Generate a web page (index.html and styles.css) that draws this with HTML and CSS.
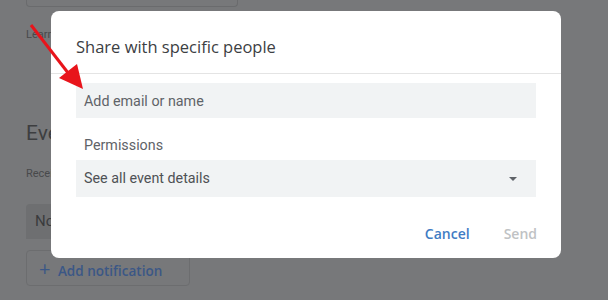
FILE: index.html
```html
<!DOCTYPE html>
<html lang="en">
  <head>
    <meta charset="utf-8" />
    <title>Share with specific people</title>
    <link rel="stylesheet" href="styles.css">
  </head>

  <body>
    <div class="page">
      <div class="top-box"></div>
      <div class="learn">Learn more</div>
      <div class="section-title">Event notifications</div>
      <div class="hint">Receive notifications</div>
      <div class="notif-box">No notifications</div>
      <div class="add-btn"><span class="plus">+</span> Add notification</div>
    </div>

    <div class="dialog">
      <div class="dialog-title">Share with specific people</div>
      <div class="dialog-body">
        <div class="field">Add email or name</div>
        <div class="perm-label">Permissions</div>
        <div class="field select">
          <span>See all event details</span>
          <span class="caret"></span>
        </div>
      </div>
      <div class="dialog-actions">
        <span class="btn btn-cancel">Cancel</span>
        <span class="btn btn-send">Send</span>
      </div>
    </div>

    <svg class="arrow" width="100" height="100" viewBox="0 0 100 100">
      <line x1="31" y1="25" x2="72" y2="78" stroke="#e8141b" stroke-width="3" />
      <polygon points="83,89 59,78 77,64" fill="#e8141b" />
    </svg>
  </body>
</html>
```

FILE: styles.css
```css
body {
  margin: 0;
  background-color: #77787a;
  font-family: Roboto, "Liberation Sans", sans-serif;
  position: relative;
  height: 300px;
  overflow: hidden;
}

.page {
  padding-left: 26px;
  color: #3d3e40;
}

.top-box {
  width: 210px;
  height: 6px;
  border: 1px solid #6a6b6d;
  border-top: none;
  border-radius: 0 0 4px 4px;
}

.learn {
  margin-top: 21px;
  font-size: 11px;
  color: #48494b;
}

.section-title {
  margin-top: 80px;
  font-size: 21px;
  color: #3d3e40;
}

.hint {
  margin-top: 22px;
  font-size: 11px;
  color: #48494b;
}

.notif-box {
  margin-top: 24px;
  width: 140px;
  height: 35px;
  line-height: 35px;
  padding-left: 9px;
  background-color: #6e6f71;
  border-radius: 4px 4px 0 0;
  font-size: 15px;
  color: #3a3b3d;
}

.add-btn {
  margin-top: 11px;
  width: 164px;
  height: 36px;
  line-height: 36px;
  border: 1px solid #6c6d6f;
  border-radius: 4px;
  box-sizing: border-box;
  padding-left: 12px;
  font-family: "Open Sans", sans-serif;
  font-weight: 600;
  font-size: 13.5px;
  color: #3b5786;
}

.plus {
  font-size: 20px;
  font-weight: 400;
  margin-right: 4px;
}

.dialog {
  position: absolute;
  left: 51px;
  top: 11px;
  width: 510px;
  height: 247px;
  background-color: #fff;
  border-radius: 8px;
  display: flex;
  flex-direction: column;
}

.dialog-title {
  height: 63px;
  box-sizing: border-box;
  padding: 24px 0 0 25px;
  border-bottom: 1px solid #e4e4e4;
  font-family: "Open Sans", sans-serif;
  font-size: 16.5px;
  font-weight: 500;
  color: #3c4043;
}

.dialog-body {
  padding: 9px 25px 0 25px;
}

.field {
  height: 35px;
  line-height: 36px;
  padding-left: 8px;
  background-color: #f1f3f4;
  font-size: 14.3px;
  color: #5f6368;
}

.perm-label {
  margin-top: 19px;
  height: 23px;
  line-height: 17px;
  padding-left: 8px;
  font-size: 14.3px;
  color: #5f6368;
}

.select {
  height: 37px;
  line-height: 37px;
  display: flex;
  justify-content: space-between;
  align-items: center;
  padding-right: 19px;
  color: #4e5155;
}

.caret {
  width: 0;
  height: 0;
  border-left: 4px solid transparent;
  border-right: 4px solid transparent;
  border-top: 4px solid #5f6368;
}

.dialog-actions {
  display: flex;
  justify-content: flex-end;
  gap: 34px;
  padding: 27px 24px 0 0;
}

.btn {
  font-family: "Open Sans", sans-serif;
  font-weight: 600;
  font-size: 14px;
}

.btn-cancel {
  color: #3f7cc4;
}

.btn-send {
  color: #c0c2c4;
}

.arrow {
  position: absolute;
  left: 0;
  top: 0;
}
```
